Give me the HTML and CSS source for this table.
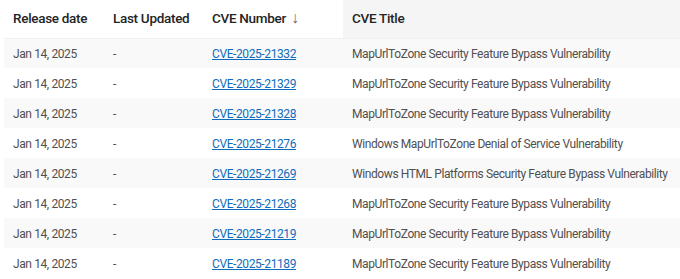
FILE: index.html
```html
<!DOCTYPE html>
<html lang="en">
<head>
  <meta charset="UTF-8">
  <title>Security Updates</title>
  <link rel="stylesheet" href="styles.css">
</head>
<body>
  <table class="cve-table">
    <colgroup>
      <col class="col-release">
      <col class="col-updated">
      <col class="col-number">
      <col class="col-title">
    </colgroup>
    <thead>
      <tr>
        <th>Release date</th>
        <th>Last Updated</th>
        <th>CVE Number <span class="sort-arrow">&#8595;</span></th>
        <th class="sorted">CVE Title</th>
      </tr>
    </thead>
    <tbody>
      <tr><td>Jan 14, 2025</td><td>-</td><td><a href="#">CVE-2025-21332</a></td><td>MapUrlToZone Security Feature Bypass Vulnerability</td></tr>
      <tr><td>Jan 14, 2025</td><td>-</td><td><a href="#">CVE-2025-21329</a></td><td>MapUrlToZone Security Feature Bypass Vulnerability</td></tr>
      <tr><td>Jan 14, 2025</td><td>-</td><td><a href="#">CVE-2025-21328</a></td><td>MapUrlToZone Security Feature Bypass Vulnerability</td></tr>
      <tr><td>Jan 14, 2025</td><td>-</td><td><a href="#">CVE-2025-21276</a></td><td>Windows MapUrlToZone Denial of Service Vulnerability</td></tr>
      <tr><td>Jan 14, 2025</td><td>-</td><td><a href="#">CVE-2025-21269</a></td><td>Windows HTML Platforms Security Feature Bypass Vulnerability</td></tr>
      <tr><td>Jan 14, 2025</td><td>-</td><td><a href="#">CVE-2025-21268</a></td><td>MapUrlToZone Security Feature Bypass Vulnerability</td></tr>
      <tr><td>Jan 14, 2025</td><td>-</td><td><a href="#">CVE-2025-21219</a></td><td>MapUrlToZone Security Feature Bypass Vulnerability</td></tr>
      <tr><td>Jan 14, 2025</td><td>-</td><td><a href="#">CVE-2025-21189</a></td><td>MapUrlToZone Security Feature Bypass Vulnerability</td></tr>
    </tbody>
  </table>
</body>
</html>
```

FILE: styles.css
```css
* {
  margin: 0;
  padding: 0;
  box-sizing: border-box;
}
body {
  font-family: 'Roboto', 'Liberation Sans', sans-serif;
  background: #fff;
  color: #242424;
  padding-left: 4px;
}
.cve-table {
  width: 676px;
  table-layout: fixed;
  border-collapse: collapse;
}
.col-release { width: 100px; }
.col-updated { width: 99px; }
.col-number { width: 140px; }
.cve-table th {
  height: 38px;
  padding: 0 0 2px 9px;
  text-align: left;
  font-size: 13.5px;
  font-weight: 500;
  letter-spacing: -0.3px;
  color: #242424;
  white-space: nowrap;
  border-bottom: 1px solid #f0f0f0;
}
.cve-table th.sorted {
  background: #f5f5f5;
}
.sort-arrow {
  margin-left: 2px;
  font-size: 16px;
  font-weight: 300;
  color: #707070;
}
.cve-table td {
  height: 30px;
  padding: 2px 0 0 9px;
  font-size: 12px;
  letter-spacing: -0.4px;
  color: #505050;
  white-space: nowrap;
}
.cve-table tbody tr:nth-child(odd) td {
  background: #f9f9f9;
}
.cve-table td a {
  color: #0f6cbd;
}
```
